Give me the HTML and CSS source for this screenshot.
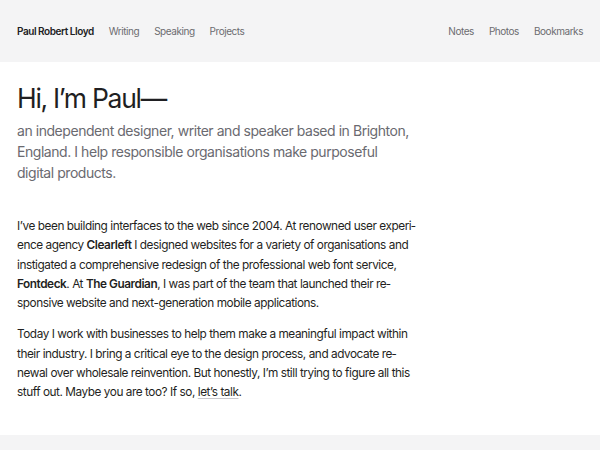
FILE: index.html
```html
<!DOCTYPE html>
<html lang="en">
<head>
<meta charset="utf-8">
<title>Paul Robert Lloyd</title>
<link rel="stylesheet" href="styles.css">
</head>
<body>
<header class="banner">
  <nav class="nav">
    <a class="nav-title" href="#">Paul Robert Lloyd</a>
    <a class="nav-link" href="#">Writing</a>
    <a class="nav-link" href="#">Speaking</a>
    <a class="nav-link" href="#">Projects</a>
  </nav>
  <nav class="nav">
    <a class="nav-link" href="#">Notes</a>
    <a class="nav-link" href="#">Photos</a>
    <a class="nav-link" href="#">Bookmarks</a>
  </nav>
</header>
<main class="main">
  <h1 class="title">Hi, I’m Paul—</h1>
  <p class="lede">an independent designer, writer and speaker based in Brighton, England. I help responsible organisations make purposeful digital products.</p>
  <div class="prose">
    <p>I’ve been building interfaces to the web since 2004. At renowned user experi&shy;ence agency <strong>Clearleft</strong> I designed websites for a variety of organisations and instigated a comprehensive redesign of the professional web font service, <strong>Fontdeck</strong>. At <strong>The Guardian</strong>, I was part of the team that launched their re&shy;sponsive website and next-generation mobile applications.</p>
    <p class="narrow">Today I work with businesses to help them make a meaningful impact within their industry. I bring a critical eye to the design process, and advocate re&shy;newal over wholesale reinvention. But honestly, I’m still trying to figure all this stuff out. Maybe you are too? If so, <a class="talk" href="#">let’s talk</a>.</p>
  </div>
</main>
<footer class="footer"></footer>
</body>
</html>
```
FILE: styles.css
```css
* { box-sizing: border-box; }
body {
  margin: 0;
  font-family: Inter, "Noto Sans", sans-serif;
  color: #1f1f22;
  background: #fff;
}
a { text-decoration: none; color: inherit; }
.banner {
  height: 62px;
  background: #f4f4f5;
  display: flex;
  justify-content: space-between;
  align-items: center;
  padding: 0 17px;
}
.nav {
  display: flex;
  gap: 15px;
  font-size: 10px;
  letter-spacing: -0.45px;
}
.nav-title { font-weight: 600; color: #202022; }
.nav-link { color: #6c6c70; }
.main {
  padding: 19px 17px 20px;
}
.title {
  margin: 0;
  font-size: 26.5px;
  font-weight: 400;
  letter-spacing: -1.3px;
  line-height: 34px;
}
.lede {
  margin: 5px 0 0;
  width: 400px;
  font-size: 14px;
  line-height: 21px;
  color: #6a6a70;
  letter-spacing: -0.45px;
}
.prose {
  margin-top: 34px;
  width: 406px;
  font-size: 11.8px;
  line-height: 19.3px;
  letter-spacing: -0.45px;
  hyphens: manual;
}
.prose p { margin: 0 0 12px; }
.prose .narrow { max-width: 396px; }
.prose strong { font-weight: 600; }
.talk {
  text-decoration: underline;
  text-decoration-color: #c8c8cc;
  text-underline-offset: 2px;
}
.footer {
  height: 40px;
  background: #f4f4f5;
}
```
